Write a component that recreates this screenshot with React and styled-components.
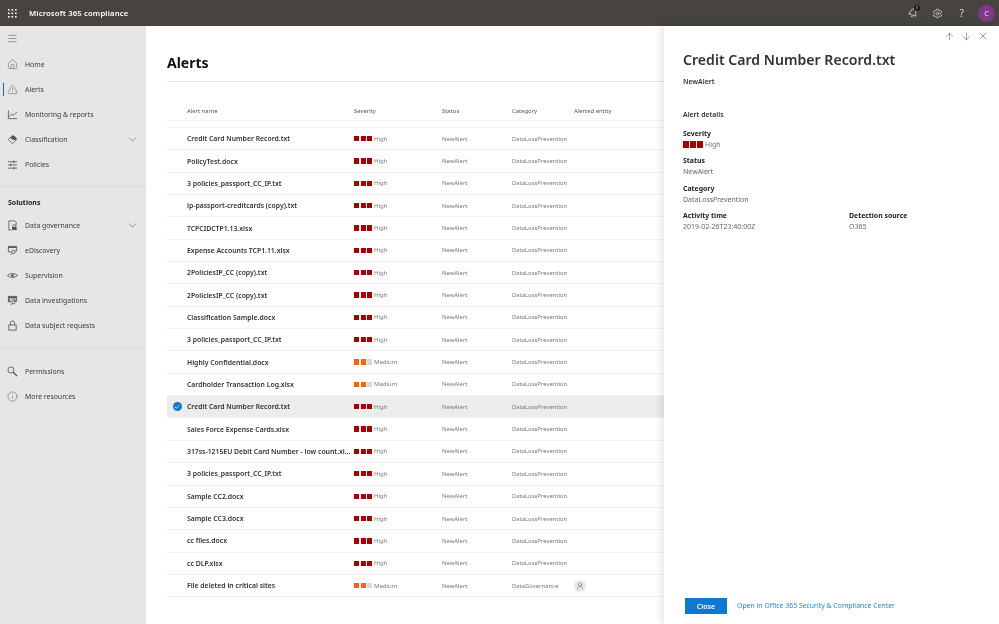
import React from 'react'
import styled, { createGlobalStyle } from 'styled-components'
import { ChevronDown, ArrowUp, ArrowDown, X, Menu, Home, TriangleAlert, Info, Bell, Settings, UserRound, Check } from 'lucide-react'

const GlobalStyle = createGlobalStyle`
    html, body {
        margin: 0;
        padding: 0;
        height: 100%;
        overflow: hidden;
        background: #fff;
        font-family: 'Noto Sans', 'Open Sans', sans-serif;
    }
`

const Page = styled.div`
    position: relative;
    width: 999px;
    height: 624px;
    display: flex;
    flex-direction: column;
    overflow: hidden;
    will-change: transform;
`

const TopBar = styled.header`
    height: 26px;
    flex: none;
    background: #464340;
    color: #fff;
    display: flex;
    align-items: center;
`

const Waffle = styled.div`
    width: 25px;
    display: flex;
    justify-content: center;
`

const Brand = styled.div`
    font-size: 7.7px;
    font-weight: 600;
    margin-left: 4px;
    flex: 1;
    letter-spacing: 0.02em;
`

const TopIcons = styled.div`
    display: flex;
    align-items: center;
    padding-right: 4px;
`

const TopIcon = styled.div`
    position: relative;
    width: 24.5px;
    display: flex;
    justify-content: center;
    color: #d8d8d8;
    font-size: 10px;
    line-height: 12px;

    & > svg.bell {
        transform: rotate(18deg);
        color: #fff;
    }
`

const Badge = styled.span`
    position: absolute;
    top: -3px;
    right: 5px;
    width: 6px;
    height: 6px;
    border-radius: 50%;
    background: #1d1b1a;
    color: #fff;
    font-size: 4px;
    line-height: 6px;
    text-align: center;
`

const Avatar = styled.div`
    width: 17px;
    height: 17px;
    border-radius: 50%;
    background: #7f3a86;
    color: #e8d5ea;
    font-size: 7.5px;
    line-height: 17px;
    text-align: center;
    margin-left: 4px;
`

const Body = styled.div`
    flex: 1;
    display: flex;
    min-height: 0;
`

const Sidebar = styled.nav`
    width: 146px;
    flex: none;
    background: #e6e6e6;
    color: #3c3c3c;
`

const Burger = styled.div`
    height: 25.5px;
    padding-left: 7px;
    display: flex;
    align-items: center;
    color: #333;
`

const NavGroup = styled.div`
    padding-top: ${({ $top }) => $top || 0}px;
    padding-bottom: ${({ $bottom }) => $bottom || 0}px;
    border-bottom: ${({ $line }) => ($line ? '1px solid #dbdbdb' : 'none')};
`

const NavItem = styled.div`
    position: relative;
    height: 25px;
    display: flex;
    align-items: center;
    padding-left: 7px;
    font-size: 6.9px;

    &::before {
        content: '';
        display: ${({ $active }) => ($active ? 'block' : 'none')};
        position: absolute;
        left: 3px;
        top: 6px;
        width: 1px;
        height: 13px;
        background: #0f6cbd;
    }
`

const NavIcon = styled.span`
    width: 18px;
    display: flex;
    flex: none;
    color: #555;
`

const NavLabel = styled.span`
    flex: 1;
`

const NavChevron = styled.span`
    display: flex;
    padding-right: 7px;
    color: #555;
`

const SectionTitle = styled.div`
    height: 15.5px;
    padding: 11px 0 0 8px;
    font-size: 7px;
    font-weight: 700;
    color: #222;
`

const Main = styled.main`
    flex: 1;
    padding-left: 21px;
    min-width: 0;
`

const PageTitle = styled.h1`
    margin: 0;
    height: 56px;
    box-sizing: border-box;
    padding-top: 26px;
    font-size: 14px;
    line-height: 22px;
    font-weight: 700;
    color: #111;
    border-bottom: 1px solid #e4e4e4;
`

const Row = styled.div`
    display: grid;
    grid-template-columns: 20px 167px 88px 70px 62px 1fr;
    align-items: center;
    height: 22.35px;
    box-sizing: border-box;
    border-bottom: 1px solid #f3f3f3;
    background: ${({ $selected }) => ($selected ? '#ececec' : 'transparent')};
    font-size: 5.9px;
    color: #777;
`

const HeadRow = styled(Row)`
    height: 17px;
    margin-top: 22px;
    padding-bottom: 3px;
    color: #555;
`

const HeadGap = styled.div`
    height: 6px;
    border-bottom: 1px solid #f3f3f3;
`

const CheckCell = styled.span`
    display: flex;
    justify-content: center;
`

const CheckDot = styled.span`
    width: 9px;
    height: 9px;
    border-radius: 50%;
    background: #0f78d4;
    color: #fff;
    display: flex;
    align-items: center;
    justify-content: center;
`

const NameCell = styled.span`
    font-size: 6.85px;
    font-weight: 600;
    color: #333;
    white-space: nowrap;
`

const SeverityWrap = styled.span`
    display: flex;
    align-items: center;
    gap: 2px;
    height: ${({ $large }) => ($large ? '11px' : 'auto')};
    font-size: ${({ $large }) => ($large ? '7px' : '6px')};
    color: #777;
`

const Bars = styled.span`
    display: flex;
    gap: ${({ $large }) => ($large ? '1px' : '1.5px')};
`

const Bar = styled.i`
    display: block;
    width: ${({ $large }) => ($large ? '6px' : '5px')};
    height: ${({ $large }) => ($large ? '6.5px' : '5.3px')};
    background: ${({ $color }) => $color};
`

const EntityIcon = styled.span`
    width: 12px;
    height: 12px;
    border-radius: 50%;
    background: #e8e8e8;
    color: #555;
    display: flex;
    align-items: center;
    justify-content: center;
`

const Panel = styled.aside`
    position: absolute;
    top: 26px;
    right: 0;
    bottom: 0;
    width: 335px;
    box-sizing: border-box;
    background: #fff;
    box-shadow: -3px 0 7px rgba(0, 0, 0, 0.1);
    padding: 0 19px;
    display: flex;
    flex-direction: column;
`

const PanelNav = styled.div`
    height: 20px;
    margin-right: -9px;
    display: flex;
    justify-content: flex-end;
    align-items: center;
    gap: 5.5px;
    color: #444;
`

const PanelTitle = styled.h2`
    margin: 3px 0 0;
    font-size: 14.1px;
    line-height: 22px;
    font-weight: 600;
    color: #333;
`

const PanelSub = styled.div`
    margin-top: 6px;
    font-size: 6.9px;
    line-height: 10px;
    font-weight: 600;
    color: #333;
`

const DetailsTitle = styled(PanelSub)`
    margin-top: 22.5px;
    margin-bottom: 8.5px;
`

const Field = styled.div`
    margin-bottom: 5.4px;
`

const FieldLabel = styled.div`
    font-size: 6.9px;
    line-height: 11px;
    font-weight: 700;
    color: #222;
`

const FieldValue = styled.div`
    font-size: 7px;
    line-height: 11px;
    color: #666;
`

const TwoColumns = styled.div`
    display: grid;
    grid-template-columns: 166px 1fr;
`

const PanelFooter = styled.div`
    margin-top: auto;
    height: 26px;
    padding-left: 2px;
    display: flex;
    align-items: flex-start;
    gap: 10px;
`

const CloseButton = styled.button`
    width: 42px;
    height: 16px;
    border: 0;
    padding: 0;
    background: #0f78d4;
    color: #fff;
    font: 600 7px 'Noto Sans', sans-serif;
`

const FooterLink = styled.a`
    font-size: 6.9px;
    line-height: 16px;
    color: #2b88d8;
`

function Glyph({ children }) {
    return (
        <svg width="11" height="11" viewBox="0 0 12 12" fill="none" stroke="currentColor" strokeWidth="0.9">
            {children}
        </svg>
    )
}

const ChartIcon = () => (
    <Glyph>
        <path d="M1.5 1.5v9h9.5" />
        <path d="M2 8.5 5 5.5l2 1.5 4-4" />
    </Glyph>
)

const TagIcon = () => (
    <Glyph>
        <path d="M6 1.5 10.5 6 6 10.5 1.5 6Z" />
        <path d="M3.5 4 5.5 2.2c1.5-.7 2.5-.4 3.2.3l2 2.3C10 6.5 8 7 6.5 6.3 5.5 5.8 4.500 5 3.5 4Z" fill="currentColor" stroke="none" />
    </Glyph>
)

const SlidersIcon = () => (
    <Glyph>
        <path d="M1 3h10M1 6.5h10M1 10h10" />
        <path d="M7.5 1.5v3M4 5v3M7.5 8.5v3" />
    </Glyph>
)

const GovernanceIcon = () => (
    <Glyph>
        <path d="M5 11H2V1h6.5L10 2.500V6" />
        <rect x="5.5" y="7.5" width="5" height="3.5" fill="currentColor" stroke="none" />
        <path d="M6.500 7.5v-1a1.5 1.5 0 0 1 3 0v1" />
    </Glyph>
)

const DiscoveryIcon = () => (
    <Glyph>
        <path d="M1.5 1.500h9v5h-1.500M4.500 7.500h-3v-6" />
        <path d="M1.5 2.500h9" strokeWidth="1.500" />
        <circle cx="7" cy="7.5" r="1.800" />
        <path d="M5.700 8.800 4 10.800" />
    </Glyph>
)

const EyeIcon = () => (
    <Glyph>
        <path d="M.5 6Q6 1.500 11.500 6 6 10.500.5 6Z" />
        <circle cx="6" cy="6" r="1.500" fill="currentColor" stroke="none" />
    </Glyph>
)

const InvestigationIcon = () => (
    <Glyph>
        <path d="M1.500 1.500h9V7H8M4 7.500H1.500v-6Z" fill="currentColor" fillOpacity="0.45" />
        <path d="M1.500 2.500h9" strokeWidth="1.500" />
        <circle cx="7" cy="7.800" r="1.800" />
        <path d="M5.700 9.100 4 11" />
    </Glyph>
)

const LockIcon = () => (
    <Glyph>
        <rect x="2" y="5.500" width="8" height="5.500" />
        <path d="M3.800 5.500V3.200a2.200 2.200 0 0 1 4.400 0v2.300" />
    </Glyph>
)

const KeySearchIcon = () => (
    <Glyph>
        <circle cx="4.300" cy="4.300" r="3.300" />
        <path d="M6.800 6.800 11 11" strokeWidth="1.400" />
    </Glyph>
)

const primary = [
    { label: 'Home', icon: () => <Home size={11} strokeWidth={1.1} /> },
    { label: 'Alerts', icon: () => <TriangleAlert size={11} strokeWidth={1.1} />, active: true },
    { label: 'Monitoring & reports', icon: ChartIcon },
    { label: 'Classification', icon: TagIcon, chevron: true },
    { label: 'Policies', icon: SlidersIcon },
]

const solutions = [
    { label: 'Data governance', icon: GovernanceIcon, chevron: true },
    { label: 'eDiscovery', icon: DiscoveryIcon },
    { label: 'Supervision', icon: EyeIcon },
    { label: 'Data investigations', icon: InvestigationIcon },
    { label: 'Data subject requests', icon: LockIcon },
]

const secondary = [
    { label: 'Permissions', icon: KeySearchIcon },
    { label: 'More resources', icon: () => <Info size={11} strokeWidth={1.1} /> },
]

const alerts = [
    ['Credit Card Number Record.txt'],
    ['PolicyTest.docx'],
    ['3 policies_passport_CC_IP.txt'],
    ['ip-passport-creditcards (copy).txt'],
    ['TCPCIDCTP1.13.xlsx'],
    ['Expense Accounts TCP1.11.xlsx'],
    ['2PoliciesIP_CC (copy).txt'],
    ['2PoliciesIP_CC (copy).txt'],
    ['Classification Sample.docx'],
    ['3 policies_passport_CC_IP.txt'],
    ['Highly Confidential.docx', 'Medium'],
    ['Cardholder Transaction Log.xlsx', 'Medium'],
    ['Credit Card Number Record.txt', 'High', true],
    ['Sales Force Expense Cards.xlsx'],
    ['317ss-1215EU Debit Card Number - low count.xl...'],
    ['3 policies_passport_CC_IP.txt'],
    ['Sample CC2.docx'],
    ['Sample CC3.docx'],
    ['cc files.docx'],
    ['cc DLP.xlsx'],
    ['File deleted in critical sites', 'Medium', false, 'DataGovernance'],
]

function Severity({ level = 'High', large }) {
    const colors = level === 'High'
        ? ['#a80000', '#a80000', '#a80000']
        : ['#f7630c', '#f7630c', '#d8d8d8']
    return (
        <SeverityWrap $large={large}>
            <Bars $large={large}>
                {colors.map((color, i) => <Bar key={i} $color={color} $large={large} />)}
            </Bars>
            {level}
        </SeverityWrap>
    )
}

function NavEntry({ item }) {
    const Icon = item.icon
    return (
        <NavItem $active={item.active}>
            <NavIcon><Icon /></NavIcon>
            <NavLabel>{item.label}</NavLabel>
            {item.chevron && <NavChevron><ChevronDown size={13} strokeWidth={1} /></NavChevron>}
        </NavItem>
    )
}

function WaffleIcon() {
    const dots = []
    for (let y = 0; y < 3; y++) {
        for (let x = 0; x < 3; x++) {
            dots.push(<rect key={`${x}${y}`} x={x * 3.5} y={y * 3.5} width="1.6" height="1.6" fill="#fff" />)
        }
    }
    return <svg width="9" height="9" viewBox="0 0 9 9">{dots}</svg>
}

export default function App() {
    return (
        <Page>
            <GlobalStyle />
            <TopBar>
                <Waffle><WaffleIcon /></Waffle>
                <Brand>Microsoft 365 compliance</Brand>
                <TopIcons>
                    <TopIcon><Bell className="bell" size={10} strokeWidth={1.5} /><Badge>1</Badge></TopIcon>
                    <TopIcon><Settings size={11} strokeWidth={1.6} /></TopIcon>
                    <TopIcon>?</TopIcon>
                    <Avatar>C</Avatar>
                </TopIcons>
            </TopBar>
            <Body>
                <Sidebar>
                    <Burger><Menu size={11} strokeWidth={1} /></Burger>
                    <NavGroup $bottom={9} $line>
                        {primary.map(item => <NavEntry key={item.label} item={item} />)}
                    </NavGroup>
                    <NavGroup $bottom={9} $line>
                        <SectionTitle>Solutions</SectionTitle>
                        {solutions.map(item => <NavEntry key={item.label} item={item} />)}
                    </NavGroup>
                    <NavGroup $top={10.5}>
                        {secondary.map(item => <NavEntry key={item.label} item={item} />)}
                    </NavGroup>
                </Sidebar>
                <Main>
                    <PageTitle>Alerts</PageTitle>
                    <HeadRow>
                        <span />
                        <span>Alert name</span>
                        <span>Severity</span>
                        <span>Status</span>
                        <span>Category</span>
                        <span>Alerted entity</span>
                    </HeadRow>
                    <HeadGap />
                    {alerts.map(([name, level, selected, category], i) => (
                        <Row key={i} $selected={selected}>
                            <CheckCell>
                                {selected && <CheckDot><Check size={6} strokeWidth={3} /></CheckDot>}
                            </CheckCell>
                            <NameCell>{name}</NameCell>
                            <Severity level={level || 'High'} />
                            <span>NewAlert</span>
                            <span>{category || 'DataLossPrevention'}</span>
                            <span>
                                {category && <EntityIcon><UserRound size={8} strokeWidth={1.3} /></EntityIcon>}
                            </span>
                        </Row>
                    ))}
                </Main>
            </Body>
            <Panel>
                <PanelNav>
                    <ArrowUp size={11} strokeWidth={1.1} />
                    <ArrowDown size={11} strokeWidth={1.1} />
                    <X size={12} strokeWidth={1.1} />
                </PanelNav>
                <PanelTitle>Credit Card Number Record.txt</PanelTitle>
                <PanelSub>NewAlert</PanelSub>
                <DetailsTitle>Alert details</DetailsTitle>
                <Field>
                    <FieldLabel>Severity</FieldLabel>
                    <Severity large />
                </Field>
                <Field>
                    <FieldLabel>Status</FieldLabel>
                    <FieldValue>NewAlert</FieldValue>
                </Field>
                <Field>
                    <FieldLabel>Category</FieldLabel>
                    <FieldValue>DataLossPrevention</FieldValue>
                </Field>
                <TwoColumns>
                    <Field>
                        <FieldLabel>Activity time</FieldLabel>
                        <FieldValue>2019-02-26T23:40:00Z</FieldValue>
                    </Field>
                    <Field>
                        <FieldLabel>Detection source</FieldLabel>
                        <FieldValue>O365</FieldValue>
                    </Field>
                </TwoColumns>
                <PanelFooter>
                    <CloseButton>Close</CloseButton>
                    <FooterLink>Open in Office 365 Security &amp; Compliance Center</FooterLink>
                </PanelFooter>
            </Panel>
        </Page>
    )
}
